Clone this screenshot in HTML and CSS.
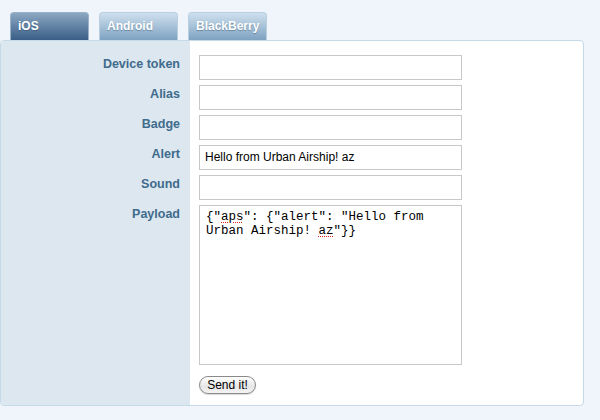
FILE: index.html
```html
<!DOCTYPE html>
<html>
<head>
<meta charset="utf-8">
<link rel="stylesheet" href="styles.css">
</head>
<body>
<div class="tabs">
  <div class="tab active">iOS</div>
  <div class="tab">Android</div>
  <div class="tab">BlackBerry</div>
</div>
<div class="panel">
  <div class="labels">
    <div class="label">Device token</div>
    <div class="label">Alias</div>
    <div class="label">Badge</div>
    <div class="label">Alert</div>
    <div class="label">Sound</div>
    <div class="label">Payload</div>
  </div>
  <div class="fields">
    <div class="field"></div>
    <div class="field"></div>
    <div class="field"></div>
    <div class="field">Hello from Urban Airship! az</div>
    <div class="field"></div>
    <div class="payload">{"<span class="sp">aps</span>": {"alert": "Hello from
Urban Airship! <span class="sp">az</span>"}}</div>
    <div class="button">Send it!</div>
  </div>
</div>
</body>
</html>
```

FILE: styles.css
```css
html, body {
  margin: 0;
  padding: 0;
}
body {
  width: 600px;
  height: 420px;
  background: #eff5fa;
  font-family: "Liberation Sans", Arial, sans-serif;
  overflow: hidden;
}
.tabs {
  display: flex;
  gap: 10px;
  padding: 12px 0 0 10px;
  height: 28px;
}
.tab {
  box-sizing: border-box;
  width: 79px;
  height: 28px;
  border-radius: 4px 4px 0 0;
  border: 1px solid #b9cfe0;
  border-bottom: none;
  background: linear-gradient(#cfe0ee, #7ea2c1);
  color: #fff;
  font-weight: bold;
  font-size: 12px;
  line-height: 14px;
  padding: 6px 0 0 7px;
  white-space: nowrap;
  text-shadow: 0 1px 1px rgba(40, 70, 100, 0.45);
}
.tab.active {
  background: linear-gradient(#8ba7c2, #3a5e87);
  border-color: #9ab3ca;
}
.panel {
  box-sizing: border-box;
  width: 584px;
  height: 366px;
  display: flex;
  border: 1px solid #c6d9e7;
  border-radius: 4px;
  background: #fff;
  overflow: hidden;
}
.labels {
  width: 189px;
  background: #dce7f0;
  padding-top: 14px;
  box-sizing: border-box;
}
.label {
  height: 25px;
  margin-bottom: 5px;
  text-align: right;
  padding: 1px 10px 0 0;
  box-sizing: border-box;
  font-size: 12.5px;
  line-height: 16px;
  font-weight: bold;
  color: #3f6b8c;
}
.fields {
  padding: 14px 0 0 9px;
  display: flex;
  flex-direction: column;
  gap: 5px;
}
.field {
  box-sizing: border-box;
  width: 263px;
  height: 25px;
  border: 1px solid #c8c8c8;
  background: #fff;
  font-size: 12px;
  line-height: 23px;
  padding-left: 5px;
  color: #000;
}
.payload {
  box-sizing: border-box;
  width: 263px;
  height: 160px;
  border: 1px solid #c8c8c8;
  background: #fff;
  font-family: "Liberation Mono", "Courier New", monospace;
  font-size: 12.5px;
  line-height: 14px;
  padding: 4px 6px;
  white-space: pre;
  color: #000;
}
.sp {
  text-decoration: underline dotted #e02020;
  text-decoration-thickness: 1px;
  text-underline-offset: 2px;
}
.button {
  box-sizing: border-box;
  margin-top: 6px;
  width: 57px;
  height: 18px;
  border: 1px solid #8a8a8a;
  border-radius: 9px;
  background: linear-gradient(#ffffff, #e6e6e6 60%, #f4f4f4);
  box-shadow: 0 1px 1px rgba(0,0,0,0.15);
  font-family: "Liberation Sans", Arial, sans-serif;
  font-size: 12px;
  line-height: 16px;
  text-align: center;
  color: #000;
}
```
